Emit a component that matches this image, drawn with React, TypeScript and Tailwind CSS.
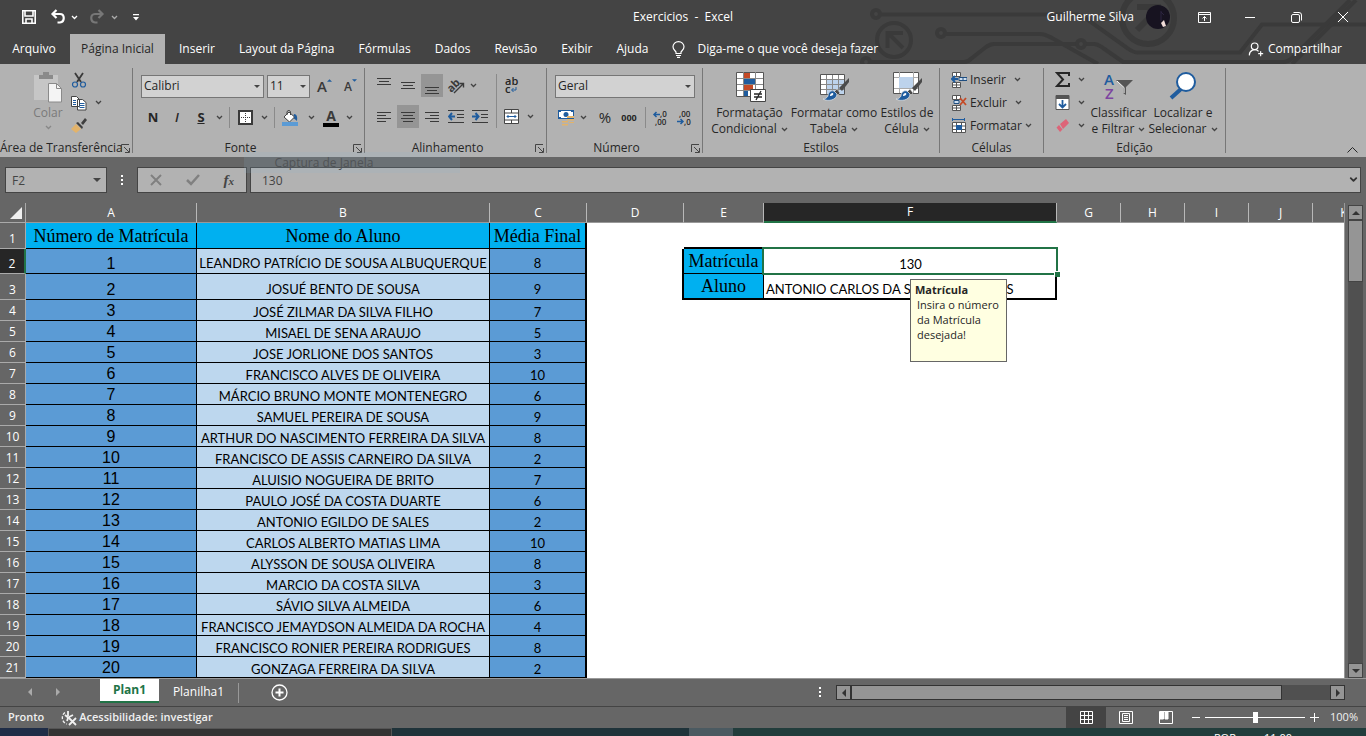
import React from "react";
import { ChevronDown, UserRoundPlus } from "lucide-react";

const tabs = ["Inserir", "Layout da Página", "Fórmulas", "Dados", "Revisão", "Exibir", "Ajuda"];

const students = [
  { id: 1, name: "LEANDRO PATRÍCIO DE SOUSA ALBUQUERQUE", grade: 8 },
  { id: 2, name: "JOSUÉ BENTO DE SOUSA", grade: 9 },
  { id: 3, name: "JOSÉ ZILMAR DA SILVA FILHO", grade: 7 },
  { id: 4, name: "MISAEL DE SENA ARAUJO", grade: 5 },
  { id: 5, name: "JOSE JORLIONE DOS SANTOS", grade: 3 },
  { id: 6, name: "FRANCISCO ALVES DE OLIVEIRA", grade: 10 },
  { id: 7, name: "MÁRCIO BRUNO MONTE MONTENEGRO", grade: 6 },
  { id: 8, name: "SAMUEL PEREIRA DE SOUSA", grade: 9 },
  { id: 9, name: "ARTHUR DO NASCIMENTO FERREIRA DA SILVA", grade: 8 },
  { id: 10, name: "FRANCISCO DE ASSIS CARNEIRO DA SILVA", grade: 2 },
  { id: 11, name: "ALUISIO NOGUEIRA DE BRITO", grade: 7 },
  { id: 12, name: "PAULO JOSÉ DA COSTA DUARTE", grade: 6 },
  { id: 13, name: "ANTONIO EGILDO DE SALES", grade: 2 },
  { id: 14, name: "CARLOS ALBERTO MATIAS LIMA", grade: 10 },
  { id: 15, name: "ALYSSON DE SOUSA OLIVEIRA", grade: 8 },
  { id: 16, name: "MARCIO DA COSTA SILVA", grade: 3 },
  { id: 17, name: "SÁVIO SILVA ALMEIDA", grade: 6 },
  { id: 18, name: "FRANCISCO JEMAYDSON ALMEIDA DA ROCHA", grade: 4 },
  { id: 19, name: "FRANCISCO RONIER PEREIRA RODRIGUES", grade: 8 },
  { id: 20, name: "GONZAGA FERREIRA DA SILVA", grade: 2 },
];

const Chevron = ({ className = "text-[#444]" }: { className?: string }) => (
  <svg viewBox="0 0 7 5" className={`h-[5px] w-[7px] shrink-0 ${className}`} fill="none" stroke="currentColor" strokeWidth="1.3">
    <path d="M1 1l2.5 2.5L6 1" />
  </svg>
);

const Arrow = ({ className }: { className: string }) => (
  <svg viewBox="0 0 8 4" className={className} fill="currentColor">
    <path d="M0 0h8L4 4z" />
  </svg>
);

const More = ({ label, className = "" }: { label: string; className?: string }) => (
  <button aria-label={label} className={`flex h-[22px] w-3 shrink-0 items-center justify-center ${className}`}>
    <Chevron />
  </button>
);

const Tool = ({ label, active = false, children }: { label: string; active?: boolean; children: React.ReactNode }) => (
  <button aria-label={label} className={`flex h-[23px] w-[22px] shrink-0 items-center justify-center ${active ? "bg-[#959595]" : ""}`}>
    {children}
  </button>
);

const Launcher = ({ label }: { label: string }) => (
  <button aria-label={label} className="absolute right-[2px] bottom-0">
    <svg viewBox="0 0 9 9" className="h-[9px] w-[9px]" fill="none" stroke="#444">
      <path d="M.5 8V.5H8M3 3l5 5M8.5 4v4.5H4" />
    </svg>
  </button>
);

function Group({ title, className, launcher = false, children }: { title: string; className: string; launcher?: boolean; children: React.ReactNode }) {
  return (
    <section aria-label={title} className={`relative flex h-[85px] shrink-0 flex-col border-r border-[#777] ${className}`}>
      <div className="flex-1">{children}</div>
      <div className={`h-[13px] text-center text-[12px] leading-[16px] whitespace-nowrap text-[#262626] ${launcher ? "pr-4" : ""}`}>{title}</div>
      {launcher && <Launcher label={`Opções de ${title}`} />}
    </section>
  );
}

function Combo({ label, value, className }: { label: string; value: string; className: string }) {
  return (
    <div className={`relative h-[23px] ${className}`}>
      <select aria-label={label} className="block h-full w-full appearance-none border border-[#767676] bg-[#d2d2d2] px-[2px] pb-[2px] text-[12px] text-[#262626]">
        <option>{value}</option>
      </select>
      <Arrow className="pointer-events-none absolute top-[10px] right-1 h-[3px] w-[6px] text-[#444]" />
    </div>
  );
}

// horizontal strokes used by every alignment icon: [x1, x2, y]
const Lines = ({ rows }: { rows: number[][] }) => (
  <svg viewBox="0 0 16 16" className="h-4 w-4" stroke="#3a3a3a">
    {rows.map(([a, b, y]) => (
      <path key={y} d={`M${a} ${y + 0.5}H${b}`} />
    ))}
  </svg>
);

const Indent = ({ right = false }: { right?: boolean }) => (
  <svg viewBox="0 0 16 16" className="h-4 w-4" stroke="#3a3a3a" fill="none">
    <path d="M0 1.5h16M9 5.5h7M9 8.5h7M0 13.5h16" />
    <path stroke="#1f5c9e" strokeWidth="2" d={right ? "M0 7.500h6M3.500 4l3 3.500-3 3.500" : "M1 7.500h6M4 4L1 7.500 4 11"} />
  </svg>
);

const Brush = () => (
  <>
    <path d="M31 7L21 17l3 3 7-9z" fill="#4a4a4a" />
    <path d="M19 18l3 4-2 2-4-3z" fill="#4a4a4a" stroke="#eee" strokeWidth=".5" />
    <path d="M16 20c-4-1-6 2-6 5-1 2-3 3-5 3 5 3 14 1 14-5z" fill="#1f5c9e" stroke="#e8e8e8" strokeWidth=".7" />
    <path d="M15 22c-2 0-3 1-3 3 2 0 4-1 3-3z" fill="#fff" />
  </>
);

function TitleArt() {
  return (
    <svg viewBox="0 0 510 64" className="absolute top-0 right-0 h-16 w-[510px]" fill="none" stroke="#3a3a3a" strokeWidth="4">
      <circle cx="20" cy="14" r="4" />
      <path d="M24 14.500h196c6 0 10 4 14 7l38 27c4 3 6 4 10 4h102l22-28h104" />
      <circle cx="38" cy="40" r="17" />
      <path d="M47 48L33 34M31.500 48V33H47" strokeWidth="4" />
      <circle cx="85" cy="33" r="4" />
      <path d="M89 34h95c5 0 8 2 12 4l46 26" />
      <circle cx="10" cy="62" r="4" />
      <path d="M14 62h94c4 0 6-2 8-4l14-11c3-2 5-3 8-3h82M230 44h8c4 0 6 2 9 4l20 14h160c4 0 6-1 9-4L494 0M436 64l64-64" />
      <circle cx="225" cy="44" r="4" />
      <circle cx="292" cy="18" r="26" strokeWidth="6" />
      <path d="M281 30l20-20M281 7h21v19" strokeWidth="6" />
    </svg>
  );
}

function TitleBar() {
  return (
    <div className="relative flex h-[34px] items-center text-[12px] text-white">
      <div className="flex flex-1 items-center">
        <button aria-label="Salvar" className="ml-[21px]">
          <svg viewBox="0 0 16 16" className="h-4 w-4" fill="none" stroke="#fff" strokeWidth="1.600">
            <path d="M1.800 1.800h12.400v12.400H1.800zM4 2v5h8V2M5 14v-4h6v4" />
          </svg>
        </button>
        <button aria-label="Desfazer" className="ml-[13px]">
          <svg viewBox="0 0 16 16" className="h-4 w-4" fill="none" stroke="#fff" strokeWidth="2.200">
            <path d="M6.500 1L2.500 5l4 4M3 5h7c5 0 5 8 0 8.500H7.500" />
          </svg>
        </button>
        <More label="Mais desfazer" className="ml-[2px] [&_svg]:text-white" />
        <button aria-label="Refazer" className="ml-[9px]">
          <svg viewBox="0 0 16 16" className="h-4 w-4" fill="none" stroke="#777" strokeWidth="2.200">
            <path d="M9.500 1l4 4-4 4M13 5H6C1 5 1 13 6 13.500h2.500" />
          </svg>
        </button>
        <More label="Mais refazer" className="ml-[3px] [&_svg]:text-[#aaa]" />
        <button aria-label="Personalizar" className="ml-[13px]">
          <svg viewBox="0 0 6 7" className="h-[7px] w-[6px]" fill="#fff">
            <path d="M0 0h6v1.200H0zM0 3h6L3 6.500z" />
          </svg>
        </button>
      </div>
      <h1 className="whitespace-pre">Exercicios  -  Excel</h1>
      <div className="flex flex-1 items-center justify-end">
        <span>Guilherme Silva</span>
        <svg viewBox="0 0 24 24" className="ml-3 h-6 w-6">
          <circle cx="12" cy="12" r="12" fill="#171320" />
          <path d="M15 6v10M15 7l3 3" stroke="#2d2540" />
          <path d="M15 18l3-3 1 3 1 3-3 1z" fill="#f0dcd8" />
        </svg>
        <button aria-label="Opções da faixa" className="ml-7">
          <svg viewBox="0 0 13 11" className="h-[11px] w-[13px]" fill="none" stroke="#fff">
            <path d="M.5.500h12v10H.5zM.5 2.500h12M6.500 9V4.500M4.500 6.500l2-2 2 2" />
          </svg>
        </button>
        <button aria-label="Minimizar" className="ml-[34px] h-px w-[10px] bg-white" />
        <button aria-label="Restaurar" className="ml-9">
          <svg viewBox="0 0 11 11" className="h-[11px] w-[11px]" fill="none" stroke="#fff">
            <rect x=".5" y="2.500" width="8" height="8" rx="1.500" />
            <path d="M2.500.5H8Q10.500.5 10.500 3v5.500" />
          </svg>
        </button>
        <button aria-label="Fechar" className="mr-[18px] ml-9">
          <svg viewBox="0 0 10 10" className="h-[10px] w-[10px]" stroke="#fff">
            <path d="M0 0l10 10M10 0L0 10" />
          </svg>
        </button>
      </div>
    </div>
  );
}

function TabBar() {
  return (
    <nav className="relative flex h-[30px] items-center text-[12px] whitespace-nowrap text-white">
      <a href="#arquivo" className="w-[70px] pr-[2px] text-center">Arquivo</a>
      <a href="#inicial" className="flex h-full w-[95px] items-center justify-center bg-[#b2b2b2] text-[#262626]">Página Inicial</a>
      <div className="flex gap-6 pl-[14px]">
        {tabs.map((tab) => (
          <a key={tab} href={`#${tab}`}>{tab}</a>
        ))}
      </div>
      <svg viewBox="0 0 13 17" className="ml-6 h-[17px] w-[13px]" fill="none" stroke="#fff" strokeWidth="1.200">
        <path d="M4 12.500V11C3 9.500 1 8.500 1 5.800a5.500 5.200 0 0 1 11 0C12 8.500 10 9.500 9 11v1.500zM4 14.500h5M5 16.400h3" />
      </svg>
      <a href="#diga" className="ml-3">Diga-me o que você deseja fazer</a>
      <button className="mr-6 ml-auto flex items-center gap-1">
        <UserRoundPlus className="h-4 w-4" strokeWidth={1.75} />
        Compartilhar
      </button>
    </nav>
  );
}

function Clipboard() {
  return (
    <Group title="Área de Transferência" className="w-[133px]" launcher>
      <div className="flex pl-7">
        <button className="flex w-10 flex-col items-center pt-1 text-[12px] leading-[16px] text-[#7a7a7a]">
          <svg viewBox="0 0 28 31" className="mb-[2px] h-[31px] w-7">
            <path d="M0 3h24v25H0z" fill="#c6c6c6" />
            <path d="M5 7V3h4V0h6v3h4v4z" fill="#8a8a8a" />
            <path d="M14.500 11.500h8l5 5v13.500h-13z" fill="#f4f4f4" stroke="#8a8a8a" />
            <path d="M22.500 11.500v5h5" fill="none" stroke="#8a8a8a" />
          </svg>
          Colar
          <Chevron className="mt-1 text-[#888]" />
        </button>
        <div className="flex flex-col">
          <Tool label="Recortar">
            <svg viewBox="0 0 16 16" className="h-4 w-4" fill="none">
              <path d="M4 1l6 9M12 1L6 10" stroke="#3a3a3a" strokeWidth="1.800" />
              <circle cx="4" cy="12.500" r="2.500" stroke="#1f5c9e" strokeWidth="1.200" />
              <circle cx="12" cy="12.500" r="2.500" stroke="#1f5c9e" strokeWidth="1.200" />
            </svg>
          </Tool>
          <div className="flex">
            <Tool label="Copiar">
              <svg viewBox="0 0 16 16" className="h-4 w-4" fill="#fff" stroke="#444">
                <path d="M.5 1.500h5l3 3v7h-8zM6.500 4.500h5l3.500 3v7.500H6.500z" />
                <path d="M2 5.500h3M2 7.500h3M2 9.500h3M8.500 8.500h5M8.500 10.500h5M8.500 12.500h5" stroke="#1f5c9e" />
              </svg>
            </Tool>
            <More label="Mais copiar" className="ml-[2px]" />
          </div>
          <Tool label="Pincel de formatação">
            <svg viewBox="0 0 16 16" className="h-4 w-4">
              <path d="M0 11l5-5 5 5-5 4z" fill="#e3b36a" />
              <path d="M5 5l2-1 5 5-1 2zM10 5l4-5 2 2-4 5z" fill="#3f3f3f" />
            </svg>
          </Tool>
        </div>
      </div>
    </Group>
  );
}

function FontGroup() {
  return (
    <Group title="Fonte" className="w-[232px]" launcher>
      <div className="flex items-center gap-[3px] pt-[7px] pl-2">
        <Combo label="Nome da fonte" value="Calibri" className="w-[123px]" />
        <Combo label="Tamanho da fonte" value="11" className="w-[43px]" />
        <button aria-label="Aumentar fonte" className="ml-1 flex h-[23px] w-6 items-center text-[15px] font-semibold text-[#3a3a3a]">
          A<Arrow className="mb-3 h-[3px] w-[5px] rotate-180 text-[#1f5c9e]" />
        </button>
        <button aria-label="Diminuir fonte" className="flex h-[23px] w-5 items-center text-[12px] font-semibold text-[#3a3a3a]">
          A<Arrow className="mb-3 h-[3px] w-[5px] text-[#1f5c9e]" />
        </button>
      </div>
      <div className="flex items-center pt-2 pl-2 text-[13px] text-[#262626]">
        <button aria-label="Negrito" className="w-6 font-bold">N</button>
        <button aria-label="Itálico" className="w-6 font-semibold italic">I</button>
        <button aria-label="Sublinhado" className="w-6 font-bold underline">S</button>
        <More label="Mais sublinhado" />
        <span className="mx-1 h-[21px] w-px bg-[#8a8a8a]" />
        <Tool label="Bordas">
          <svg viewBox="0 0 15 15" className="h-[15px] w-[15px]">
            <path d="M1 1h13v13H1z" fill="#fff" stroke="#3a3a3a" strokeWidth="2" />
            <path d="M7.500 3v10M3 7.500h10" stroke="#3a3a3a" strokeDasharray="1 1" />
          </svg>
        </Tool>
        <More label="Mais bordas" className="ml-[2px]" />
        <span className="mx-1 h-[21px] w-px bg-[#8a8a8a]" />
        <Tool label="Cor de preenchimento">
          <svg viewBox="0 0 16 16" className="h-4 w-4">
            <path d="M12 4q4 0 3 7-2-2-4-3z" fill="#1f5c9e" />
            <path d="M2 7l5-5 5.500 5-5 5z" fill="#fff" stroke="#444" />
            <path d="M5 5V1.500Q7-1 8.500 1.500V5" fill="none" stroke="#444" />
            <path d="M0 12h16v4H0z" fill="#5b9bd5" />
          </svg>
        </Tool>
        <More label="Mais preenchimento" className="ml-1" />
        <button aria-label="Cor da fonte" className="ml-[6px] flex h-[23px] w-4 flex-col items-center pt-[2px] text-[14px] leading-[15px] font-bold text-[#3a3a3a]">
          <span>A</span>
          <span className="h-1 w-4 bg-black" />
        </button>
        <More label="Mais cor da fonte" className="ml-1" />
      </div>
    </Group>
  );
}

function AlignGroup() {
  return (
    <Group title="Alinhamento" className="w-[182px]" launcher>
      <div className="flex pt-[6px] pl-2">
        <div className="w-[123px] shrink-0">
          <div className="flex gap-[2px]">
            <Tool label="Alinhar em cima"><Lines rows={[[1, 15, 0], [3, 13, 3], [1, 15, 6]]} /></Tool>
            <Tool label="Alinhar no meio"><Lines rows={[[1, 15, 4], [3, 13, 7], [1, 15, 10]]} /></Tool>
            <Tool label="Alinhar embaixo" active><Lines rows={[[1, 15, 9], [3, 13, 12], [1, 15, 15]]} /></Tool>
            <Tool label="Orientação">
              <svg viewBox="0 0 16 16" className="h-4 w-4 overflow-visible">
                <text x="-1" y="11" fontSize="11" fontWeight="700" fill="#3a3a3a" transform="rotate(-45 6 8)">ab</text>
                <path d="M6 15l9-9M11.500 5.500H15.500V9.500" stroke="#3a3a3a" strokeWidth="1.400" fill="none" />
              </svg>
            </Tool>
            <More label="Mais orientação" className="-ml-[2px]" />
          </div>
          <div className="mt-2 flex gap-[2px]">
            <Tool label="Alinhar à esquerda"><Lines rows={[[1, 15, 3], [1, 10, 6], [1, 15, 9], [1, 10, 12]]} /></Tool>
            <Tool label="Centralizar" active><Lines rows={[[1, 15, 3], [3, 13, 6], [1, 15, 9], [3, 13, 12]]} /></Tool>
            <Tool label="Alinhar à direita"><Lines rows={[[1, 15, 3], [6, 15, 6], [1, 15, 9], [6, 15, 12]]} /></Tool>
            <Tool label="Diminuir recuo"><Indent /></Tool>
            <Tool label="Aumentar recuo"><Indent right /></Tool>
          </div>
        </div>
        <span className="h-[54px] w-px bg-[#8a8a8a]" />
        <div className="pl-[3px]">
          <Tool label="Quebrar texto">
            <svg viewBox="0 0 16 18" className="h-[18px] w-4 overflow-visible">
              <text x="2" y="8" fontSize="11" fontWeight="600" fill="#262626">ab</text>
              <text x="2" y="16" fontSize="11" fontWeight="600" fill="#262626">c</text>
              <path d="M13 10v3H9M10.500 11L8.500 13l2 2" stroke="#1f5c9e" fill="none" />
            </svg>
          </Tool>
          <div className="mt-2 flex">
            <Tool label="Mesclar">
              <svg viewBox="0 0 15 15" className="h-[15px] w-[15px]" fill="#fff" stroke="#444">
                <path d="M.5.500h14v14H.5zM.5 4h14M.5 11h14M7.500.500V4M7.500 11v4" />
                <path d="M3 7.500h9M4.500 6L3 7.500 4.500 9M10.500 6L12 7.500 10.500 9" stroke="#1f5c9e" fill="none" />
              </svg>
            </Tool>
            <More label="Mais mesclar" className="ml-[2px]" />
          </div>
        </div>
      </div>
    </Group>
  );
}

const Decimals = ({ top, bottom, right = false }: { top: string; bottom: string; right?: boolean }) => (
  <svg viewBox="0 0 16 16" className="h-4 w-4 overflow-visible" fill="#262626" fontSize="8" fontWeight="600">
    <text x={right ? 2 : 7} y="7">{top}</text>
    <text x={right ? 7 : 2} y="15">{bottom}</text>
    <path d={right ? "M0 11.500h5.500M3.500 9L6 11.500 3.500 14" : "M1 4.500h6M3.500 2L1 4.500 3.500 7"} fill="none" stroke="#1f5c9e" strokeWidth="1.500" />
  </svg>
);

function NumberGroup() {
  return (
    <Group title="Número" className="w-[156px]" launcher>
      <div className="pt-[7px] pl-2">
        <Combo label="Formato de número" value="Geral" className="w-[140px]" />
      </div>
      <div className="flex items-center pt-2 pl-2 text-[#262626]">
        <Tool label="Moeda">
          <svg viewBox="0 0 17 17" className="h-[17px] w-[17px]">
            <path d="M0 1h16v9H0z" fill="#1f5c9e" />
            <path d="M3 2h10v1h2v5h-2v1H3V8H1V3h2z" fill="#fff" />
            <circle cx="8" cy="5.500" r="2.500" fill="#1f5c9e" />
            <path d="M9 7h7v2H9zM9 10h7v1.500H9zM4 12h6v1.500H4zM4 15h6v1.500H4zM11 13h5v1h-5z" fill="#e3b36a" />
          </svg>
        </Tool>
        <More label="Mais moeda" />
        <button aria-label="Porcentagem" className="ml-1 w-6 text-[15px] leading-[23px]">%</button>
        <button aria-label="Separador de milhares" className="w-6 text-[9px] leading-[23px] font-bold">000</button>
        <span className="mr-1 ml-1 h-[21px] w-px bg-[#8a8a8a]" />
        <Tool label="Aumentar casas"><Decimals top=",0" bottom=",00" /></Tool>
        <span className="w-[2px]" />
        <Tool label="Diminuir casas"><Decimals top=",00" bottom=",0" right /></Tool>
      </div>
    </Group>
  );
}

function BigButton({ icon, first, second, className }: { icon: React.ReactNode; first: string; second: string; className: string }) {
  return (
    <button className={`flex flex-col items-center pt-[3px] text-[12px] leading-[16px] whitespace-nowrap text-[#262626] ${className}`}>
      {icon}
      <span className="mt-[2px]">{first}</span>
      <span className="flex items-center gap-1">
        {second}
        <Chevron />
      </span>
    </button>
  );
}

function StylesGroup() {
  return (
    <Group title="Estilos" className="w-[237px]">
      <div className="flex pl-[5px]">
        <BigButton
          className="w-[83px]"
          first="Formatação"
          second="Condicional"
          icon={
            <svg viewBox="0 0 32 32" className="h-8 w-8">
              <path d="M2.500 1.500h27v24h-27z" fill="#fff" stroke="#555" />
              <path d="M9.500 1v24M21.500 1v24M3 7.500h26M3 13.500h26M3 19.500h26" stroke="#888" />
              <path d="M10 2h6v5h-6zM10 14h9v5h-9z" fill="#c44a26" />
              <path d="M10 8h11v5H10zM10 20h4v5h-4z" fill="#1f5c9e" />
              <path d="M16.500 18.500h15v12h-15z" fill="#fff" stroke="#444" />
              <path d="M20 23h8M20 26h8M27 20l-5 9" stroke="#262626" strokeWidth="1.300" />
            </svg>
          }
        />
        <BigButton
          className="w-[86px]"
          first="Formatar como"
          second="Tabela"
          icon={
            <svg viewBox="0 0 32 32" className="h-8 w-8">
              <path d="M2.500 3.500h24v20h-24z" fill="#fff" stroke="#555" />
              <path d="M8 8h18v15H8z" fill="#bdd3ec" />
              <path d="M8.500 4v19M14.500 4v19M20.500 4v19M3 8.500h23M3 13.500h23M3 18.500h23" stroke="#888" />
              <Brush />
            </svg>
          }
        />
        <BigButton
          className="w-[60px]"
          first="Estilos de"
          second="Célula"
          icon={
            <svg viewBox="0 0 32 32" className="h-8 w-8">
              <path d="M2.500 1.500h25v21h-25z" fill="#fff" stroke="#555" />
              <path d="M8.500 1v21M22.500 1v21M3 6.500h24M3 17.500h24" stroke="#aaa" />
              <path d="M8 6h14v11H8z" fill="#bdd3ec" />
              <Brush />
            </svg>
          }
        />
      </div>
    </Group>
  );
}

const cellRows = [
  { label: "Inserir", mark: <path d="M8 5.500h8v3H8zM12 5.500v3" fill="#cfe0f2" stroke="#1f4e80" />, lead: <path d="M7 7H1M4 4L1 7l3 3" stroke="#1f5c9e" strokeWidth="2" fill="none" /> },
  { label: "Excluir", mark: <path d="M9 3l6 7M15 3l-6 7" stroke="#c44a26" strokeWidth="1.800" />, lead: <path d="M3 5.500h5v3H3z" fill="#cfe0f2" stroke="#1f4e80" /> },
];

function CellsGroup() {
  return (
    <Group title="Células" className="w-[104px]">
      <div className="flex flex-col pl-[11px] text-[12px] text-[#262626]">
        {cellRows.map((row) => (
          <button key={row.label} className="flex h-[23px] items-center gap-2">
            <span className="flex items-center gap-[3px]">
              <svg viewBox="0 0 16 16" className="h-4 w-4">
                <path d="M1.500.500h8v4h-8zM5.500.500v4M1.500 10.500h8v5h-8zM5.500 10.500v5M1.500 13h8" fill="#fff" stroke="#555" />
                {row.lead}
                {row.mark}
              </svg>
              {row.label}
            </span>
            <Chevron />
          </button>
        ))}
        <button className="flex h-[23px] items-center gap-[3px]">
          <svg viewBox="0 0 16 16" className="h-4 w-4">
            <path d="M1.500 4.500h13v10h-13zM1.500 8h13M1.500 11.500h13M5.500 4.500v10M10.500 4.500v10" fill="#fff" stroke="#555" />
            <path d="M5 7h6v5H5z" fill="#1f5c9e" />
            <path d="M2 1.500h11M1.500 0v3M13.500 0v3" stroke="#1f5c9e" />
          </svg>
          Formatar
          <Chevron />
        </button>
      </div>
    </Group>
  );
}

function EditGroup() {
  return (
    <Group title="Edição" className="w-[182px]">
      <div className="flex">
        <div className="w-[43px] pl-[7px]">
          <div className="flex items-center">
            <Tool label="Soma">
              <svg viewBox="0 0 15 15" className="h-[15px] w-[15px]" fill="none" stroke="#262626" strokeWidth="2">
                <path d="M14 4V1H2l6 6.500L2 14h12v-3" />
              </svg>
            </Tool>
            <More label="Mais soma" className="ml-[2px]" />
          </div>
          <div className="flex items-center">
            <Tool label="Preencher">
              <svg viewBox="0 0 15 15" className="h-[15px] w-[15px]">
                <path d="M1 .5h13v14H1z" fill="#fff" stroke="#555" />
                <path d="M1 0h13v4H1z" fill="#555" />
                <path d="M7.500 5v7M4 9l3.500 3.500L11 9" stroke="#1f5c9e" strokeWidth="1.800" fill="none" />
              </svg>
            </Tool>
            <More label="Mais preencher" className="ml-[2px]" />
          </div>
          <div className="flex items-center">
            <Tool label="Limpar">
              <svg viewBox="0 0 15 15" className="h-[15px] w-[15px]" fill="#dd6478">
                <path d="M5 6l6-5 3 4-6 6zM4 7l3.500 4.500L5 14l-3.500-4.500z" />
              </svg>
            </Tool>
            <More label="Mais limpar" className="ml-[2px]" />
          </div>
        </div>
        <BigButton
          className="w-[63px]"
          first="Classificar"
          second="e Filtrar"
          icon={
            <svg viewBox="0 0 32 32" className="h-8 w-8" fontSize="15" fontWeight="600">
              <text x="1" y="14" fill="#1f5c9e">A</text>
              <text x="2" y="28" fill="#7d45a0">Z</text>
              <path d="M13 9h17l-7 7v8l-3-2v-6z" fill="#555" />
              <path d="M14 10l7 6.500V22" stroke="#fff" fill="none" />
            </svg>
          }
        />
        <BigButton
          className="w-[66px]"
          first="Localizar e"
          second="Selecionar"
          icon={
            <svg viewBox="0 0 32 32" className="h-8 w-8">
              <path d="M4 27l10-9" stroke="#1f5c9e" strokeWidth="4" />
              <circle cx="19" cy="11" r="9" fill="#fff" stroke="#1f5c9e" strokeWidth="2" />
            </svg>
          }
        />
      </div>
    </Group>
  );
}

function FormulaBar() {
  return (
    <div className="flex h-[46px] shrink-0 items-start pt-[10px] pr-[5px] pl-[5px] text-[12px] text-[#444]">
      <div className="relative h-[26px] w-[102px] shrink-0">
        <input aria-label="Caixa de nome" defaultValue="F2" className="h-full w-full border border-[#444] bg-[#b2b2b2] px-[6px]" />
        <Arrow className="pointer-events-none absolute top-[11px] right-[6px] h-1 w-2" />
      </div>
      <div className="flex h-[26px] w-[30px] shrink-0 flex-col items-center justify-center gap-[2px]">
        <i className="h-[2px] w-[2px] bg-white" />
        <i className="h-[2px] w-[2px] bg-white" />
        <i className="h-[2px] w-[2px] bg-white" />
      </div>
      <div className="flex h-[26px] w-[110px] shrink-0 items-center justify-between border border-[#444] bg-[#b2b2b2] px-3">
        <button aria-label="Cancelar">
          <svg viewBox="0 0 12 12" className="h-3 w-3" stroke="#808080" strokeWidth="2"><path d="M1 1l10 10M11 1L1 11" /></svg>
        </button>
        <button aria-label="Inserir">
          <svg viewBox="0 0 14 12" className="h-3 w-[14px]" fill="none" stroke="#808080" strokeWidth="2.500"><path d="M1 6l4 4 8-9" /></svg>
        </button>
        <button aria-label="Inserir função" className="font-['Liberation_Serif',serif] text-[15px] leading-none font-bold italic">
          f<span className="text-[11px]">x</span>
        </button>
      </div>
      <div className="relative ml-[3px] h-[26px] flex-1">
        <input aria-label="Barra de fórmulas" defaultValue="130" className="h-full w-full border border-[#444] bg-[#b2b2b2] px-[11px]" />
        <ChevronDown className="pointer-events-none absolute top-[7px] right-[2px] h-[11px] w-[11px] text-[#333]" strokeWidth={4} />
      </div>
    </div>
  );
}

const columns = ["A", "B", "C", "D", "E", "F", "G", "H", "I", "J", "K"];
const cell = "border-r border-b border-black p-0 overflow-hidden whitespace-nowrap";
const times = "font-['Liberation_Serif',serif] text-[18px] leading-[22px]";

// Lookup block that lives in E2:F3
function LookupCells({ row }: { row: number }) {
  if (row === 1) {
    return (
      <>
        <td />
        <td className="border-b-2 border-black" />
        <td />
      </>
    );
  }
  if (row === 2) {
    return (
      <>
        <td className="border-r-2 border-black" />
        <td className={`${cell} bg-[#00b0f0] text-center ${times}`}>Matrícula</td>
        <td className="relative p-0 text-center align-bottom leading-5">
          130
          <div className="absolute -top-[2px] -right-px -bottom-px -left-[2px] border-2 border-[#217346]" />
          <div className="absolute -right-[3px] -bottom-[3px] h-[6px] w-[6px] border-t border-l border-white bg-[#217346]" />
          <div role="tooltip" className="absolute top-[30px] left-[146px] z-10 h-[83px] w-[97px] border border-[#666] bg-[#ffffe1] pt-[3px] pl-1 text-left font-['Open_Sans',sans-serif] text-[11px] leading-[15px] text-[#262626]">
            <strong className="block leading-[14px]">Matrícula</strong>
            <span className="block whitespace-nowrap pl-[2px]">
              Insira o número
              <br />
              da Matrícula
              <br />
              desejada!
            </span>
          </div>
        </td>
      </>
    );
  }
  if (row === 3) {
    return (
      <>
        <td className="border-r-2 border-black" />
        <td className={`border-r border-b-2 border-black bg-[#00b0f0] p-0 text-center ${times}`}>Aluno</td>
        <td className="overflow-hidden border-r-2 border-b-2 border-black p-0 pl-[2px] align-bottom leading-[18px] whitespace-nowrap">ANTONIO CARLOS DA SILVA RODRIGUES</td>
      </>
    );
  }
  return (
    <>
      <td />
      <td />
      <td />
    </>
  );
}

function RowHead({ row }: { row: number }) {
  return (
    <th className={`border-b border-[#aaa] p-0 align-bottom font-['Open_Sans',sans-serif] text-[12px] leading-[18px] font-normal text-white ${row === 2 ? "border-r-2 border-r-[#217346] bg-[#262626]" : "border-r bg-[#666]"}`}>
      {row}
    </th>
  );
}

function Sheet() {
  return (
    <div className="min-w-0 flex-1 overflow-hidden border-r border-[#999] bg-white">
      <table className="w-full min-w-[1376px] table-fixed border-separate border-spacing-0 font-['Lato',sans-serif] text-[13px] text-black">
        <colgroup>
          <col className="w-[26px]" />
          <col className="w-[171px]" />
          <col className="w-[293px]" />
          <col className="w-[97px]" />
          <col className="w-[97px]" />
          <col className="w-[80px]" />
          <col className="w-[293px]" />
          <col className="w-[64px]" />
          <col className="w-[64px]" />
          <col className="w-[64px]" />
          <col className="w-[64px]" />
          <col />
        </colgroup>
        <thead>
          <tr className="h-5 bg-[#666] font-['Open_Sans',sans-serif] text-[12px] leading-[18px] text-white">
            <th className="border-r border-b border-[#aaa] p-0">
              <svg viewBox="0 0 12 12" className="mr-[3px] ml-auto h-3 w-3" fill="#f0f0f0"><path d="M12 0v12H0z" /></svg>
            </th>
            {columns.map((c) => (
              <th key={c} className={`border-r border-r-[#b8b8b8] p-0 font-normal ${c === "F" ? "border-b-2 border-b-[#217346] bg-[#262626]" : "border-b border-b-[#999]"}`}>
                {c}
              </th>
            ))}
          </tr>
        </thead>
        <tbody>
          <tr className="h-[26px]">
            <RowHead row={1} />
            <td className={`${cell} bg-[#00b0f0] text-center ${times}`}>Número de Matrícula</td>
            <td className={`${cell} bg-[#00b0f0] text-center ${times}`}>Nome do Aluno</td>
            <td className={`overflow-hidden border-r-2 border-b border-black bg-[#00b0f0] p-0 text-center whitespace-nowrap ${times}`}>Média Final</td>
            <LookupCells row={1} />
          </tr>
          {students.map((s) => (
            <tr key={s.id} className={s.id === 1 ? "h-[25px] leading-5" : s.id === 2 ? "h-[26px] leading-5" : "h-[21px] leading-4"}>
              <RowHead row={s.id + 1} />
              <td className={`${cell} bg-[#5b9bd5] text-center align-bottom font-['Liberation_Sans',sans-serif] text-[16px] leading-[18px]`}>{s.id}</td>
              <td className={`${cell} bg-[#bdd7ee] text-center align-bottom`}>{s.name}</td>
              <td className="border-r-2 border-b border-black bg-[#5b9bd5] p-0 text-center align-bottom">{s.grade}</td>
              <LookupCells row={s.id + 1} />
            </tr>
          ))}
        </tbody>
      </table>
    </div>
  );
}

function VerticalScroll() {
  return (
    <div className="flex w-[21px] shrink-0 flex-col bg-[#666] pt-[2px] pr-[3px] pl-[3px]">
      <button aria-label="Rolar para cima" className="flex h-[15px] items-center justify-center border border-[#444] bg-[#959595]">
        <Arrow className="h-1 w-2 rotate-180 text-[#333]" />
      </button>
      <div className="flex-1 bg-[#505050]">
        <div className="h-[62px] border border-[#444] bg-[#959595]" />
      </div>
      <button aria-label="Rolar para baixo" className="flex h-[15px] items-center justify-center border border-[#444] bg-[#959595]">
        <Arrow className="h-1 w-2 text-[#333]" />
      </button>
    </div>
  );
}

function SheetTabs() {
  return (
    <div className="flex h-7 shrink-0 items-start border-t border-[#999] text-[12px] text-white">
      <div className="flex h-6 w-[100px] items-center gap-5 pt-px pl-[26px] text-[#aaa]">
        <button aria-label="Planilha anterior"><Arrow className="h-1 w-2 rotate-90" /></button>
        <button aria-label="Próxima planilha"><Arrow className="h-1 w-2 -rotate-90" /></button>
      </div>
      <button className="h-6 w-[59px] border-b-2 border-[#217346] bg-white font-bold text-[#217346]">Plan1</button>
      <button className="h-6 w-[79px] pt-px">Planilha1</button>
      <span className="mt-1 h-5 w-px bg-[#999]" />
      <button aria-label="Nova planilha" className="ml-8 flex h-[26px] items-center">
        <svg viewBox="0 0 17 17" className="h-[17px] w-[17px]" fill="none" stroke="#fff">
          <circle cx="8.500" cy="8.500" r="7.500" strokeWidth="1.300" />
          <path d="M8.500 4.500v8M4.500 8.500h8" strokeWidth="2" />
        </svg>
      </button>
      <div className="mr-[15px] ml-auto flex h-[26px] flex-col items-center justify-center gap-[2px]">
        <i className="h-[2px] w-[2px] bg-white" />
        <i className="h-[2px] w-[2px] bg-white" />
        <i className="h-[2px] w-[2px] bg-white" />
      </div>
      <div className="mt-[6px] mr-[21px] flex h-[15px] w-[509px] shrink-0 bg-[#505050]">
        <button aria-label="Rolar para a esquerda" className="flex w-[15px] items-center justify-center border border-[#333] bg-[#959595]">
          <Arrow className="h-1 w-2 shrink-0 rotate-90 text-[#333]" />
        </button>
        <div className="w-[431px] border border-[#333] bg-[#959595]" />
        <button aria-label="Rolar para a direita" className="ml-auto flex w-[15px] items-center justify-center border border-[#333] bg-[#959595]">
          <Arrow className="h-1 w-2 shrink-0 -rotate-90 text-[#333]" />
        </button>
      </div>
    </div>
  );
}

function StatusBar() {
  return (
    <div className="flex h-[22px] shrink-0 items-center border-t border-[#444] text-[11px] font-semibold text-[#f0f0f0]">
      <span className="pl-2">Pronto</span>
      <button className="ml-4 flex items-center gap-[2px]">
        <svg viewBox="0 0 17 16" className="h-4 w-[17px]" fill="none" stroke="#f0f0f0" strokeWidth="1.300">
          <path d="M5 2.500A6.500 6.500 0 0 0 7 14" strokeDasharray="3 1.500" />
          <path d="M8 1v5M5 5l3 2.500L13 5M8 8l-1 3M9 8l7 7M16 8l-7 7" strokeWidth="1.800" />
        </svg>
        Acessibilidade: investigar
      </button>
      <div className="ml-auto flex h-full items-center">
        <button aria-label="Normal" className="flex h-full w-10 items-center justify-center bg-[#444]">
          <svg viewBox="0 0 13 13" className="h-[13px] w-[13px]" fill="none" stroke="#fff"><path d="M.5.500h12v12H.5zM4.500 0v13M8.500 0v13M0 4.500h13M0 8.500h13" /></svg>
        </button>
        <button aria-label="Layout da página" className="flex h-full w-10 items-center justify-center">
          <svg viewBox="0 0 14 13" className="h-[13px] w-[14px]" fill="none" stroke="#fff"><path d="M.5.500h13v12H.5zM3.500 2.500h7v8h-7zM5 4.500h4M5 6.500h4M5 8.500h4" /></svg>
        </button>
        <button aria-label="Quebra de página" className="flex h-full w-10 items-center justify-center">
          <svg viewBox="0 0 14 13" className="h-[13px] w-[14px]" fill="none" stroke="#fff"><path d="M.5.500h13v12H.5z" /><path d="M1 1h3.500v7H1zM6 1h3v7H6z" fill="#fff" /></svg>
        </button>
        <button aria-label="Reduzir" className="ml-[6px] h-px w-2 bg-white" />
        <input
          type="range"
          aria-label="Zoom"
          defaultValue={50}
          className="mx-[5px] h-[11px] w-[100px] appearance-none bg-[linear-gradient(#fff,#fff)] bg-[length:100%_1px] bg-center bg-no-repeat [&::-webkit-slider-thumb]:h-[11px] [&::-webkit-slider-thumb]:w-[5px] [&::-webkit-slider-thumb]:appearance-none [&::-webkit-slider-thumb]:bg-white"
        />
        <button aria-label="Ampliar">
          <svg viewBox="0 0 9 9" className="h-[9px] w-[9px]" stroke="#fff"><path d="M4.500 0v9M0 4.500h9" /></svg>
        </button>
        <span className="w-[47px] pr-2 text-right font-normal">100%</span>
      </div>
    </div>
  );
}

// top edge of the desktop taskbar
function Taskbar() {
  return (
    <div className="flex h-2 shrink-0 overflow-hidden bg-[#223d3c] text-[11px] leading-[14px] text-white">
      <div className="w-12 bg-[#1f2d47]" />
      <div className="w-[344px] border-x border-t border-[#555] bg-[#333]" />
      <div className="w-[297px] bg-[#1f333a]" />
      <div className="w-11 bg-[#4b5a61]" />
      <span className="mt-[3px] ml-auto">POR</span>
      <span className="mt-[3px] mr-[74px] ml-7">11:00</span>
    </div>
  );
}

export default function App() {
  return (
    <div className="flex min-h-screen flex-col overflow-hidden bg-[#666] font-['Open_Sans',sans-serif]">
      <header className="relative shrink-0 bg-[#444]">
        <TitleArt />
        <TitleBar />
        <TabBar />
      </header>
      <div className="relative flex h-[93px] shrink-0 bg-[#b2b2b2] pt-1">
        <Clipboard />
        <FontGroup />
        <AlignGroup />
        <NumberGroup />
        <StylesGroup />
        <CellsGroup />
        <EditGroup />
        <button aria-label="Recolher faixa" className="mt-auto mr-2 mb-1 ml-auto">
          <svg viewBox="0 0 11 6" className="h-[6px] w-[11px]" fill="none" stroke="#262626"><path d="M.5 5.500l5-5 5 5" /></svg>
        </button>
        <div className="pointer-events-none absolute top-[88px] left-[244px] z-10 h-[21px] w-[216px] bg-[#90b8d0]/15 pr-14 text-center text-[12px] leading-[21px] text-[#505356]">
          Captura de Janela
        </div>
      </div>
      <FormulaBar />
      <main className="flex shrink-0">
        <Sheet />
        <VerticalScroll />
      </main>
      <SheetTabs />
      <StatusBar />
      <Taskbar />
    </div>
  );
}
